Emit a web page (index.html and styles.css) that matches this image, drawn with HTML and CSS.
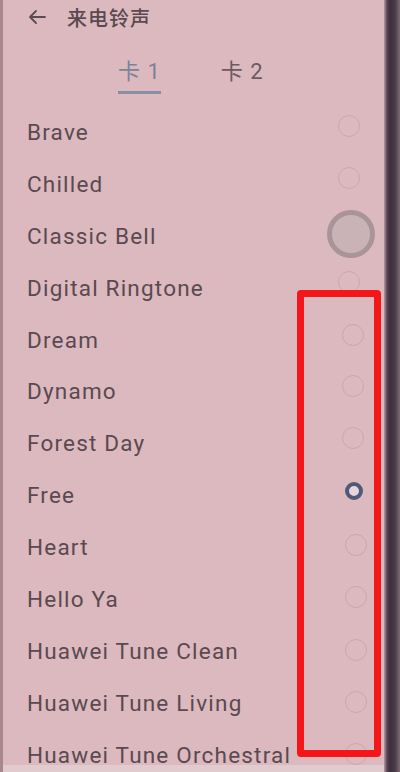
FILE: index.html
```html
<!DOCTYPE html>
<html lang="zh">

<head>
    <meta charset="UTF-8">
    <meta name="viewport" content="width=device-width, initial-scale=1.0">
    <title>来电铃声</title>
    <link rel="stylesheet" href="styles.css">
</head>

<body>
    <div class="screen">
        <div class="page">
            <header class="top-bar">
                <svg class="back" width="20" height="16" viewBox="0 0 20 16">
                    <path d="M18 8H3M9 2L3 8l6 6" fill="none" stroke="#5b4b52" stroke-width="1.8" stroke-linecap="round" stroke-linejoin="round"/>
                </svg>
                <span class="title">来电铃声</span>
            </header>

            <nav class="tabs">
                <div class="tab active">卡 1</div>
                <div class="tab">卡 2</div>
            </nav>

            <ul class="ringtones">
                <li><span>Brave</span><i class="radio"></i></li>
                <li><span>Chilled</span><i class="radio"></i></li>
                <li><span>Classic Bell</span><i class="radio pressed"></i></li>
                <li><span>Digital Ringtone</span><i class="radio"></i></li>
                <li><span>Dream</span><i class="radio"></i></li>
                <li><span>Dynamo</span><i class="radio"></i></li>
                <li><span>Forest Day</span><i class="radio"></i></li>
                <li><span>Free</span><i class="radio checked"></i></li>
                <li><span>Heart</span><i class="radio"></i></li>
                <li><span>Hello Ya</span><i class="radio"></i></li>
                <li><span>Huawei Tune Clean</span><i class="radio"></i></li>
                <li><span>Huawei Tune Living</span><i class="radio"></i></li>
                <li><span>Huawei Tune Orchestral</span><i class="radio"></i></li>
            </ul>

            <div class="bottom-strip"></div>

            <!-- annotation box drawn over the radio column -->
            <div class="mark"></div>
        </div>
        <div class="edge"></div>
    </div>
</body>

</html>
```

FILE: styles.css
```css
/* Reset styles */
* {
    margin: 0;
    padding: 0;
    box-sizing: border-box;
}

body {
    width: 400px;
    height: 772px;
    overflow: hidden;
    background-color: #dab8be;
    font-family: Roboto, "Noto Sans CJK SC", sans-serif;
    color: #5a4950;
}

.screen {
    display: flex;
    height: 772px;
}

.page {
    position: relative;
    flex: 1;
    display: flex;
    flex-direction: column;
    background-color: #dbb9bf;
    border-left: 3px solid #a8878f;
}

/* phone frame on the right */
.edge {
    width: 16px;
    background: linear-gradient(to right, #b99aa2 0, #5a4654 3px, #3c2f3c 6px, #4a3c48 11px, #7d6a76 16px);
}

/* Header */
.top-bar {
    display: flex;
    align-items: center;
    height: 34px;
    padding-left: 24px;
}

.back {
    margin-right: 20px;
}

.title {
    font-size: 20px;
    font-weight: 500;
    letter-spacing: 1px;
}

/* Tabs */
.tabs {
    display: flex;
    gap: 60px;
    padding-left: 115px;
    margin-top: 19px;
}

.tab {
    font-size: 22px;
    color: #6a5a62;
    padding-bottom: 6px;
    border-bottom: 3px solid transparent;
    letter-spacing: 1px;
}

.tab.active {
    color: #7d8296;
    border-bottom-color: #8a8ea4;
}

/* List */
.ringtones {
    flex: 1;
    overflow: hidden;
    list-style: none;
    margin-top: 12px;
}

.ringtones li {
    display: flex;
    align-items: center;
    justify-content: space-between;
    height: 51.9px;
    padding-left: 24px;
    padding-right: 24px;
    font-size: 22.5px;
    letter-spacing: 1.2px;
}

.radio {
    width: 22px;
    height: 22px;
    margin-bottom: 11px;
    border: 1.5px solid #c9a7ae;
    border-radius: 50%;
}

.ringtones li:nth-child(n+5) .radio {
    margin-right: -4px;
    margin-bottom: 10px;
}

.ringtones li:nth-child(n+9) .radio {
    margin-right: -7px;
    margin-bottom: 4px;
}

.ringtones li:nth-child(n+11) .radio {
    margin-bottom: 1px;
}

.radio.pressed {
    width: 48px;
    height: 48px;
    margin-right: -15px;
    margin-bottom: 4px;
    border: 5px solid #a89499;
    background-color: #c9b3b7;
}

.ringtones li .radio.checked {
    width: 18px;
    height: 18px;
    margin-right: -3px;
    margin-bottom: 8px;
    border: 4px solid #4f5a78;
    background-color: #e4d6dc;
}

.bottom-strip {
    height: 7px;
    background-color: #e2cbcf;
}

.mark {
    position: absolute;
    left: 294px;
    top: 290px;
    width: 84px;
    height: 467px;
    border: 7px solid #f5161a;
    border-radius: 4px;
}
```
